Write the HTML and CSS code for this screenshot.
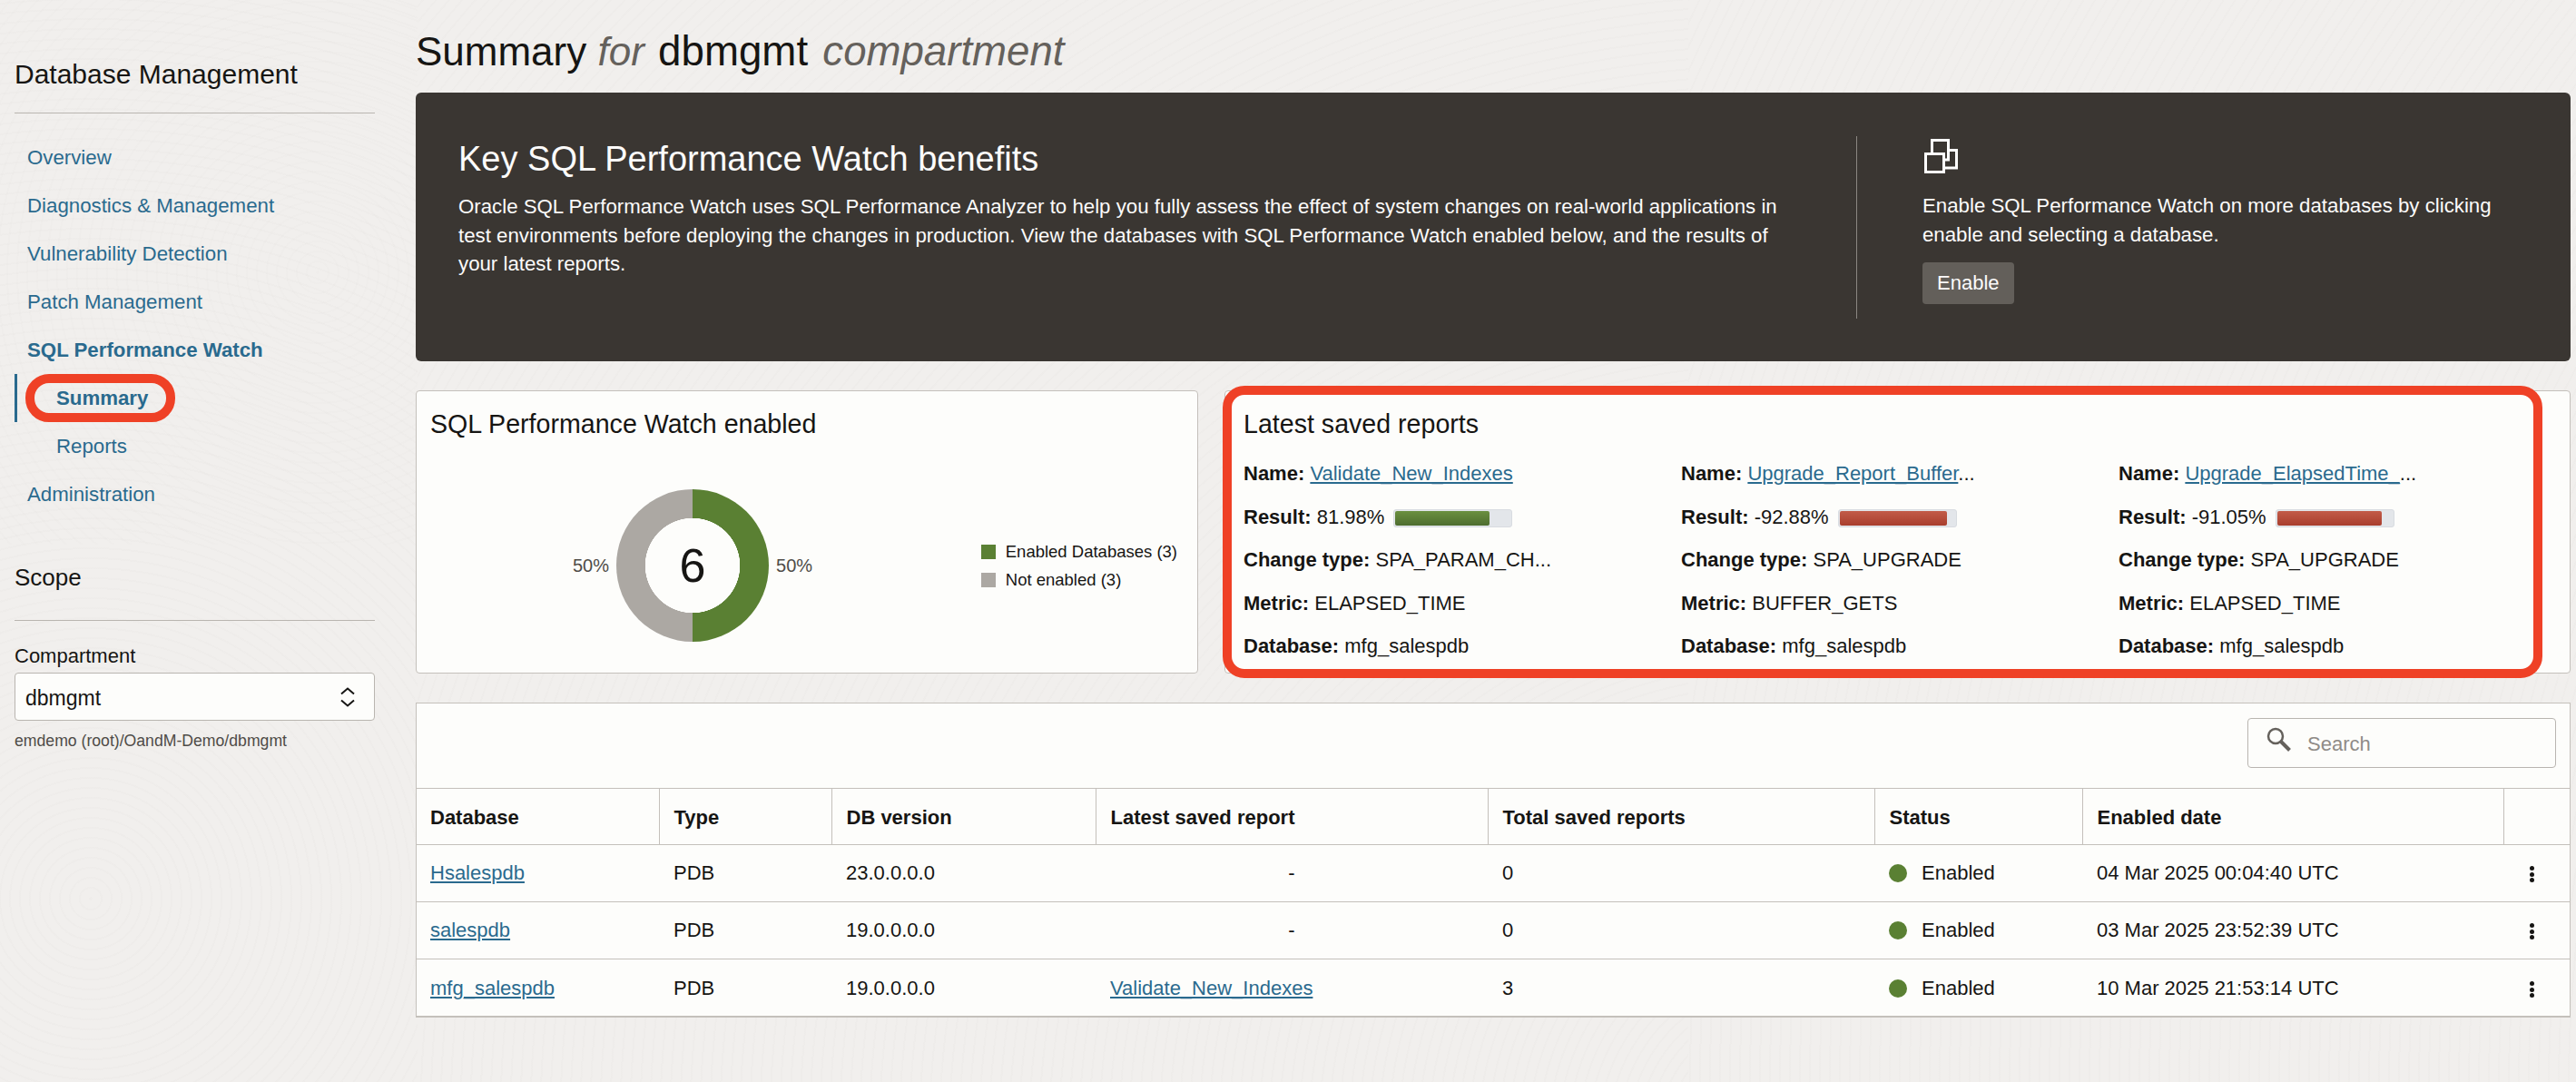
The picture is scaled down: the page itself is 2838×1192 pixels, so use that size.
FILE: index.html
```html
<!DOCTYPE html>
<html lang="en">
<head>
	<meta charset="UTF-8">
	<title>Summary - SQL Performance Watch</title>
	<link rel="stylesheet" href="styles.css">
</head>
<body>
	<!-- left menu -->
	<aside class="side">
		<h2 class="side-title">Database Management</h2>
		<nav class="menu">
			<a class="menu-item" href="###">Overview</a>
			<a class="menu-item" href="###">Diagnostics &amp; Management</a>
			<a class="menu-item" href="###">Vulnerability Detection</a>
			<a class="menu-item" href="###">Patch Management</a>
			<a class="menu-item menu-open" href="###">SQL Performance Watch</a>
			<a class="menu-item menu-sub menu-current" href="###">Summary<span class="mark-oval"></span></a>
			<a class="menu-item menu-sub" href="###">Reports</a>
			<a class="menu-item" href="###">Administration</a>
		</nav>
		<h2 class="scope-title">Scope</h2>
		<div class="field-label">Compartment</div>
		<div class="select">
			<span>dbmgmt</span>
			<svg class="select-arrows" width="16" height="22" viewBox="0 0 16 22"><path d="M1 7.500l7-6 7 6M1 14.500l7 6 7-6" fill="none" stroke="#161513" stroke-width="2"/></svg>
		</div>
		<div class="field-path">emdemo (root)/OandM-Demo/dbmgmt</div>
	</aside>

	<main class="main">
		<h1 class="page-title">Summary <i>for</i> <span class="title-name">dbmgmt</span> <i class="title-tail">compartment</i></h1>

		<!-- dark banner -->
		<section class="banner">
			<div class="banner-left">
				<h2>Key SQL Performance Watch benefits</h2>
				<p>Oracle SQL Performance Watch uses SQL Performance Analyzer to help you fully assess the effect of system changes on real-world applications in test environments before deploying the changes in production. View the databases with SQL Performance Watch enabled below, and the results of your latest reports.</p>
			</div>
			<div class="banner-right">
				<svg class="banner-icon" width="37" height="38" viewBox="0 0 37 38"><g fill="none" stroke="#fff" stroke-width="3"><path d="M8.500 15V1.500h18V23H22"/><path d="M27 12.500h8.500V32H22"/><rect x="1.500" y="16.500" width="20" height="20"/></g></svg>
				<p>Enable SQL Performance Watch on more databases by clicking enable and selecting a database.</p>
				<button class="banner-btn">Enable</button>
			</div>
		</section>

		<div class="cards">
			<section class="card card-chart">
				<h3 class="card-title">SQL Performance Watch enabled</h3>
				<div class="chart-row">
					<div class="donut-wrap">
						<span class="pct">50%</span>
						<div class="donut"><span>6</span></div>
						<span class="pct">50%</span>
					</div>
					<ul class="legend">
						<li><span class="swatch swatch-green"></span>Enabled Databases (3)</li>
						<li><span class="swatch swatch-grey"></span>Not enabled (3)</li>
					</ul>
				</div>
			</section>

			<section class="card card-reports">
				<span class="mark-box"></span>
				<h3 class="card-title">Latest saved reports</h3>
				<div class="reports">
					<dl class="report">
						<div><b>Name:</b> <a href="###">Validate_New_Indexes</a></div>
						<div><b>Result:</b> 81.98%<span class="bar"><span class="bar-fill bar-good" style="width:81.98%"></span></span></div>
						<div><b>Change type:</b> SPA_PARAM_CH...</div>
						<div><b>Metric:</b> ELAPSED_TIME</div>
						<div><b>Database:</b> mfg_salespdb</div>
					</dl>
					<dl class="report">
						<div><b>Name:</b> <a href="###">Upgrade_Report_Buffer</a>...</div>
						<div><b>Result:</b> -92.88%<span class="bar"><span class="bar-fill bar-bad" style="width:92.88%"></span></span></div>
						<div><b>Change type:</b> SPA_UPGRADE</div>
						<div><b>Metric:</b> BUFFER_GETS</div>
						<div><b>Database:</b> mfg_salespdb</div>
					</dl>
					<dl class="report">
						<div><b>Name:</b> <a href="###">Upgrade_ElapsedTime_</a>...</div>
						<div><b>Result:</b> -91.05%<span class="bar"><span class="bar-fill bar-bad" style="width:91.05%"></span></span></div>
						<div><b>Change type:</b> SPA_UPGRADE</div>
						<div><b>Metric:</b> ELAPSED_TIME</div>
						<div><b>Database:</b> mfg_salespdb</div>
					</dl>
				</div>
			</section>
		</div>

		<!-- databases table -->
		<section class="panel">
			<div class="toolbar">
				<div class="search">
					<svg width="28" height="27" viewBox="0 0 28 27"><circle cx="10" cy="10" r="8" fill="none" stroke="#65615c" stroke-width="2.500"/><path d="M16 16l9.500 9.500" stroke="#65615c" stroke-width="4"/></svg>
					<span>Search</span>
				</div>
			</div>
			<table class="grid">
				<colgroup>
					<col class="c1"><col class="c2"><col class="c3"><col class="c4"><col class="c5"><col class="c6"><col class="c7"><col>
				</colgroup>
				<tr>
					<th>Database</th>
					<th>Type</th>
					<th>DB version</th>
					<th>Latest saved report</th>
					<th>Total saved reports</th>
					<th>Status</th>
					<th>Enabled date</th>
					<th></th>
				</tr>
				<tr>
					<td><a href="###">Hsalespdb</a></td>
					<td>PDB</td>
					<td>23.0.0.0.0</td>
					<td class="center">-</td>
					<td>0</td>
					<td><span class="status"><span class="dot"></span>Enabled</span></td>
					<td>04 Mar 2025 00:04:40 UTC</td>
					<td class="actions"><span class="kebab"><i></i><i></i><i></i></span></td>
				</tr>
				<tr>
					<td><a href="###">salespdb</a></td>
					<td>PDB</td>
					<td>19.0.0.0.0</td>
					<td class="center">-</td>
					<td>0</td>
					<td><span class="status"><span class="dot"></span>Enabled</span></td>
					<td>03 Mar 2025 23:52:39 UTC</td>
					<td class="actions"><span class="kebab"><i></i><i></i><i></i></span></td>
				</tr>
				<tr class="last">
					<td><a href="###">mfg_salespdb</a></td>
					<td>PDB</td>
					<td>19.0.0.0.0</td>
					<td><a href="###">Validate_New_Indexes</a></td>
					<td>3</td>
					<td><span class="status"><span class="dot"></span>Enabled</span></td>
					<td>10 Mar 2025 21:53:14 UTC</td>
					<td class="actions"><span class="kebab"><i></i><i></i><i></i></span></td>
				</tr>
			</table>
		</section>
	</main>
</body>
</html>
```

FILE: styles.css
```css
* {
	box-sizing: border-box;
}
html, body {
	height: 100%;
}
body {
	margin: 0;
	display: flex;
	overflow: hidden;
	font-family: "Liberation Sans", Arial, sans-serif;
	font-size: 22px;
	color: #161513;
	background-color: #f1efed;
	/* faint swirl texture */
	background-image:
		repeating-radial-gradient(circle at 100px 990px, rgba(90,80,70,.016) 0 2px, transparent 2px 11px),
		repeating-radial-gradient(circle at 350px 300px, rgba(90,80,70,.012) 0 2px, transparent 2px 11px),
		repeating-radial-gradient(circle at 1500px 1250px, rgba(90,80,70,.014) 0 2px, transparent 2px 11px),
		repeating-radial-gradient(circle at 2500px 1200px, rgba(90,80,70,.014) 0 2px, transparent 2px 11px);
	background-size: 460px 1192px, 460px 600px, 1400px 1192px, 1400px 1192px;
	background-position: 0 0, 0 0, 460px 0, 1860px 0;
	background-repeat: no-repeat;
}
a {
	color: #2a6a8e;
}
h1, h2, h3, p, ul, dl {
	margin: 0;
	padding: 0;
	font-weight: normal;
}

/* left menu */
.side {
	width: 397px;
	margin-left: 16px;
	flex: none;
	padding-top: 61px;
}
.side-title {
	font-size: 30px;
	line-height: 42px;
	height: 64px;
	border-bottom: 1px solid #b9b5b0;
}
.menu {
	display: flex;
	flex-direction: column;
	margin-top: 22px;
}
.menu-item {
	position: relative;
	height: 53px;
	line-height: 53px;
	padding-left: 14px;
	font-size: 22.250px;
	text-decoration: none;
}
.menu-open {
	font-weight: bold;
}
.menu-sub {
	padding-left: 46px;
}
.menu-current {
	font-weight: bold;
	border-left: 3px solid #2a6a8e;
	padding-left: 43px;
}
.mark-oval {
	position: absolute;
	left: 9px;
	top: 0;
	width: 165px;
	height: 53px;
	border: 10px solid #ef4126;
	border-radius: 26px;
}
.scope-title {
	margin-top: 44px;
	font-size: 26px;
	line-height: 42px;
	height: 69px;
	border-bottom: 1px solid #b9b5b0;
}
.field-label {
	margin-top: 24px;
	line-height: 30px;
}
.select {
	display: flex;
	justify-content: space-between;
	align-items: center;
	height: 53px;
	margin-top: 3px;
	padding: 0 21px 0 11px;
	font-size: 23px;
	background: #fdfdfb;
	border: 1px solid #b9b5b0;
	border-radius: 4px;
}
.select span {
	padding-top: 3px;
}
.field-path {
	margin-top: 12px;
	font-size: 17.650px;
	color: #4f4c48;
}

/* main column */
.main {
	width: 2374px;
	margin-left: 45px;
	flex: none;
	padding-top: 27px;
}
.page-title {
	font-size: 44px;
	line-height: 60px;
	height: 75px;
}
.page-title i {
	color: #65615c;
}
.title-name {
	margin-left: 3px;
	font-size: 45.700px;
}
.page-title .title-tail {
	margin-left: 4px;
	font-size: 45.600px;
}
.banner {
	display: flex;
	height: 296px;
	padding: 48px 0 47px;
	color: #fcfbfa;
	background: #3a3632;
	border-radius: 6px;
}
.banner-left {
	width: 1588px;
	padding: 0 80px 0 47px;
	border-right: 1px solid #8b8782;
	font-size: 22.250px;
}
.banner-left h2 {
	font-size: 38px;
	line-height: 50px;
}
.banner-left p {
	margin-top: 12px;
	line-height: 31.500px;
}
.banner-right {
	flex: 1;
	padding: 3px 70px 0 72px;
	font-size: 22.250px;
}
.banner-icon {
	display: block;
	margin-left: 2px;
}
.banner-right p {
	margin-top: 20px;
	line-height: 32px;
}
.banner-btn {
	display: block;
	height: 46px;
	margin-top: 14px;
	padding: 0 16px;
	font: inherit;
	font-size: 22px;
	color: inherit;
	background: #635f5a;
	border: 0;
	border-radius: 4px;
}

/* cards */
.cards {
	display: flex;
	gap: 29px;
	margin-top: 32px;
}
.card {
	position: relative;
	height: 312px;
	padding: 14px 15px;
	background: #fdfdfb;
	border: 1px solid #c4c0bb;
	border-radius: 4px;
}
.card-title {
	font-size: 28.600px;
	line-height: 44px;
}
.card-chart {
	width: 862px;
}
.card-reports {
	flex: 1;
	padding-left: 20px;
}
.chart-row {
	display: flex;
	align-items: center;
	justify-content: space-between;
	margin-top: 50px;
}
.donut-wrap {
	display: flex;
	align-items: center;
	gap: 8px;
	margin-left: 157px;
	font-size: 20px;
	color: #4f4c48;
}
.donut {
	display: flex;
	align-items: center;
	justify-content: center;
	width: 168px;
	height: 168px;
	font-size: 52px;
	color: #161513;
	border-radius: 50%;
	background: radial-gradient(circle, #fdfdfb 52px, transparent 52.500px), linear-gradient(90deg, #aca8a3 50%, #5a8033 50%);
}
.legend {
	list-style: none;
	font-size: 18.500px;
	margin-right: 7px;
}
.legend li {
	display: flex;
	align-items: center;
	gap: 11px;
	height: 31px;
}
.swatch {
	width: 16px;
	height: 16px;
}
.swatch-green {
	background: #5a8033;
}
.swatch-grey {
	background: #aca8a3;
}
.mark-box {
	position: absolute;
	left: -3px;
	right: 30px;
	top: -6px;
	bottom: -6px;
	border: 10px solid #ef4126;
	border-radius: 24px;
	pointer-events: none;
}
.reports {
	display: grid;
	grid-template-columns: repeat(3, 482px);
	margin-top: 9px;
}
.report div {
	height: 47.500px;
	line-height: 47.500px;
	white-space: nowrap;
}
.bar {
	display: inline-block;
	width: 131px;
	height: 20px;
	margin-left: 10px;
	padding: 1px;
	vertical-align: middle;
	background: #e3e6ea;
	border: 1px solid #d8dce1;
	border-radius: 3px;
}
.bar-fill {
	display: block;
	height: 100%;
	border-radius: 2px;
}
.bar-good {
	background: linear-gradient(#6b9040, #4e6d2f);
}
.bar-bad {
	background: linear-gradient(#c25c49, #a93e2d);
}

/* table */
.panel {
	height: 347px;
	margin-top: 32px;
	background: #fdfdfb;
	border: 1px solid #c4c0bb;
	border-bottom-width: 2px;
}
.toolbar {
	display: flex;
	justify-content: flex-end;
	height: 93px;
	padding: 16px 15px 0 0;
}
.search {
	display: flex;
	align-items: center;
	gap: 17px;
	width: 340px;
	height: 55px;
	padding: 0 0 0 20px;
	color: #8f8b87;
	border: 1px solid #b9b5b0;
	border-radius: 4px;
}
.search svg {
	margin-top: -8px;
}
.search span {
	padding-top: 3px;
}
.grid {
	width: 100%;
	table-layout: fixed;
	border-collapse: collapse;
}
.c1 { width: 267px; }
.c2 { width: 190px; }
.c3 { width: 291px; }
.c4 { width: 432px; }
.c5 { width: 426px; }
.c6 { width: 229px; }
.c7 { width: 464px; }
.grid th, .grid td {
	height: 63px;
	padding: 0 0 0 16px;
	text-align: left;
	border-top: 1px solid #c4c0bb;
}
.grid th {
	height: 62px;
	padding-top: 3px;
	border-left: 1px solid #c4c0bb;
}
.grid th:first-child {
	border-left: 0;
}
.grid th:first-child, .grid td:first-child {
	padding-left: 15px;
}
.grid .center {
	padding: 0;
	text-align: center;
}
.grid .actions {
	padding: 0 10px 0 0;
	text-align: center;
}
.last td {
	height: 65px;
}
.status {
	display: flex;
	align-items: center;
	gap: 16px;
}
.dot {
	width: 20px;
	height: 20px;
	background: #5a8033;
	border-radius: 50%;
}
.kebab {
	display: inline-flex;
	flex-direction: column;
	gap: 1.500px;
	vertical-align: middle;
}
.kebab i {
	width: 5px;
	height: 5px;
	background: #161513;
	border-radius: 50%;
}
```
